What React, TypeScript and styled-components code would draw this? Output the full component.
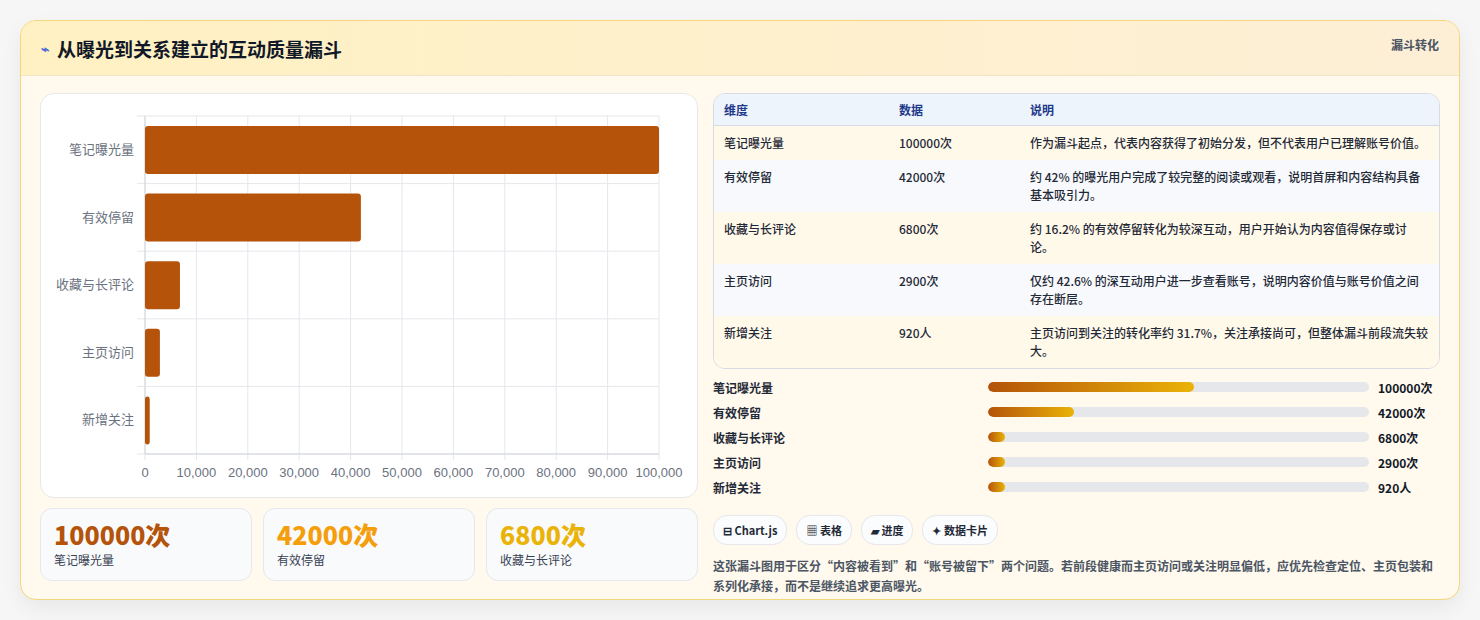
import styled, { createGlobalStyle } from 'styled-components';

const GlobalStyle = createGlobalStyle`
  body {
    margin: 0;
    background: #f6f6f6;
    font-family: "Noto Sans CJK SC", "Noto Sans", sans-serif;
    color: #1f2937;
  }
`;

const rows = [
  { name: '笔记曝光量', value: 100000, unit: '次', note: '作为漏斗起点，代表内容获得了初始分发，但不代表用户已理解账号价值。', fill: 54 },
  { name: '有效停留', value: 42000, unit: '次', note: '约 42% 的曝光用户完成了较完整的阅读或观看，说明首屏和内容结构具备基本吸引力。', fill: 22.6 },
  { name: '收藏与长评论', value: 6800, unit: '次', note: '约 16.2% 的有效停留转化为较深互动，用户开始认为内容值得保存或讨论。', fill: 4.5 },
  { name: '主页访问', value: 2900, unit: '次', note: '仅约 42.6% 的深互动用户进一步查看账号，说明内容价值与账号价值之间存在断层。', fill: 4.5 },
  { name: '新增关注', value: 920, unit: '人', note: '主页访问到关注的转化率约 31.7%，关注承接尚可，但整体漏斗前段流失较大。', fill: 4.5 },
];

function FunnelChart() {
  const x0 = 104;
  const w = 514;
  const top = 22;
  const rowH = 67.6;
  const ticks = [0, 10000, 20000, 30000, 40000, 50000, 60000, 70000, 80000, 90000, 100000];
  return (
    <svg width="657" height="403" viewBox="0 0 657 403">
      {ticks.map((t) => {
        const x = x0 + (t / 100000) * w;
        return (
          <g key={t}>
            <line x1={x} y1={top} x2={x} y2={top + rowH * 5 + 6} stroke="#e5e7eb" />
            <text x={x} y={383} fontSize="13" fill="#6b7280" textAnchor="middle" fontFamily="Liberation Sans, sans-serif">
              {t.toLocaleString('en-US')}
            </text>
          </g>
        );
      })}
      {[0, 1, 2, 3, 4, 5].map((i) => (
        <line key={i} x1={x0 - 8} y1={top + i * rowH} x2={x0 + w} y2={top + i * rowH} stroke="#e5e7eb" />
      ))}
      <line x1={x0} y1={top} x2={x0} y2={top + rowH * 5} stroke="#d1d5db" />
      <line x1={x0} y1={top + rowH * 5} x2={x0 + w} y2={top + rowH * 5} stroke="#d1d5db" />
      {rows.map((r, i) => {
        const y = top + i * rowH;
        const bw = Math.max(4, (r.value / 100000) * w);
        return (
          <g key={r.name}>
            <rect x={x0} y={y + 10} width={bw} height={48} rx="3" fill="#b45309" />
            <text x={x0 - 11} y={y + 38} fontSize="13" fill="#6b7280" textAnchor="end">
              {r.name}
            </text>
          </g>
        );
      })}
    </svg>
  );
}

export default function App() {
  return (
    <Page>
      <GlobalStyle />
      <Card>
        <Header>
          <Title>
            <Bolt>⌁</Bolt>从曝光到关系建立的互动质量漏斗
          </Title>
          <Tag>漏斗转化</Tag>
        </Header>
        <Body>
          <LeftCol>
            <ChartBox>
              <FunnelChart />
            </ChartBox>
            <Stats>
              <Stat>
                <StatNum color="#b45309">100000次</StatNum>
                <StatLabel>笔记曝光量</StatLabel>
              </Stat>
              <Stat>
                <StatNum color="#f59e0b">42000次</StatNum>
                <StatLabel>有效停留</StatLabel>
              </Stat>
              <Stat>
                <StatNum color="#eab308">6800次</StatNum>
                <StatLabel>收藏与长评论</StatLabel>
              </Stat>
            </Stats>
          </LeftCol>
          <RightCol>
            <Table>
              <colgroup>
                <col style={{ width: 175 }} />
                <col style={{ width: 131 }} />
                <col />
              </colgroup>
              <thead>
                <tr>
                  <Th>维度</Th>
                  <Th>数据</Th>
                  <Th>说明</Th>
                </tr>
              </thead>
              <tbody>
                {rows.map((r, i) => (
                  <Tr key={r.name} $odd={i % 2 === 1}>
                    <Td>{r.name}</Td>
                    <Td>
                      {r.value}
                      {r.unit}
                    </Td>
                    <Td>{r.note}</Td>
                  </Tr>
                ))}
              </tbody>
            </Table>
            <Progress>
              {rows.map((r) => (
                <ProgRow key={r.name}>
                  <ProgLabel>{r.name}</ProgLabel>
                  <Track>
                    <Fill style={{ width: `${r.fill}%` }} />
                  </Track>
                  <ProgVal>
                    {r.value}
                    {r.unit}
                  </ProgVal>
                </ProgRow>
              ))}
            </Progress>
            <Chips>
              <Chip>⊟ Chart.js</Chip>
              <Chip>▦ 表格</Chip>
              <Chip>▰ 进度</Chip>
              <Chip>✦ 数据卡片</Chip>
            </Chips>
            <Summary>
              这张漏斗图用于区分“内容被看到”和“账号被留下”两个问题。若前段健康而主页访问或关注明显偏低，应优先检查定位、主页包装和系列化承接，而不是继续追求更高曝光。
            </Summary>
          </RightCol>
        </Body>
      </Card>
    </Page>
  );
}

const Page = styled.div`
  padding: 20px;
  height: 620px;
  box-sizing: border-box;
`;

const Card = styled.div`
  width: 1440px;
  height: 580px;
  box-sizing: border-box;
  border: 1px solid #f6d67a;
  border-radius: 16px;
  background: #fff9ee;
  overflow: hidden;
  box-shadow: 0 8px 20px rgba(0, 0, 0, 0.06);
`;

const Header = styled.div`
  height: 54px;
  display: flex;
  justify-content: space-between;
  padding: 0 20px;
  background: linear-gradient(90deg, #fff1c2, #fdefd6);
  border-bottom: 1px solid #f1e4c8;
`;

const Title = styled.h2`
  margin: 0;
  display: flex;
  align-items: center;
  gap: 8px;
  font-size: 19px;
  font-weight: 700;
  color: #111827;
`;

const Bolt = styled.span`
  color: #4f6bd8;
  font-size: 14px;
`;

const Tag = styled.div`
  margin-top: 15px;
  font-size: 12px;
  font-weight: 700;
  color: #4b5563;
`;

const Body = styled.div`
  display: flex;
  gap: 15px;
  padding: 17px 19px 0 19px;
`;

const LeftCol = styled.div`
  width: 658px;
  display: flex;
  flex-direction: column;
  gap: 10px;
`;

const ChartBox = styled.div`
  height: 403px;
  background: #fff;
  border: 1px solid #e8e8e8;
  border-radius: 14px;
  overflow: hidden;
`;

const Stats = styled.div`
  display: grid;
  grid-template-columns: repeat(3, 1fr);
  gap: 11px;
`;

const Stat = styled.div`
  height: 73px;
  box-sizing: border-box;
  background: #f9fafc;
  border: 1px solid #e5e7eb;
  border-radius: 12px;
  padding: 8px 13px;
`;

const StatNum = styled.div<{ color: string }>`
  font-size: 25px;
  font-weight: 800;
  line-height: 34px;
  color: ${(p) => p.color};
`;

const StatLabel = styled.div`
  font-size: 12px;
  color: #374151;
`;

const RightCol = styled.div`
  width: 729px;
  display: flex;
  flex-direction: column;
`;

const Table = styled.table`
  width: 100%;
  table-layout: fixed;
  border-collapse: separate;
  border-spacing: 0;
  border: 1px solid #d6dbe4;
  border-radius: 12px;
  overflow: hidden;
  font-size: 12px;
  color: #1f2937;
`;

const Th = styled.th`
  text-align: left;
  height: 31px;
  padding: 0 10px;
  background: #eef4fc;
  color: #1e3a8a;
  font-weight: 700;
  border-bottom: 1px solid #d6dbe4;
`;

const Tr = styled.tr<{ $odd: boolean }>`
  background: ${(p) => (p.$odd ? '#f7f9fc' : '#fff9ea')};
  & + & td {
    border-top: 1px solid #e5e7eb;
  }
`;

const Td = styled.td`
  vertical-align: top;
  padding: 8px 10px;
  line-height: 18px;
  font-weight: 500;
`;

const Progress = styled.div`
  margin-top: 9px;
  display: flex;
  flex-direction: column;
  gap: 7px;
`;

const ProgRow = styled.div`
  display: grid;
  grid-template-columns: 266px 381px 1fr;
  gap: 9px;
  align-items: center;
  font-size: 12px;
  font-weight: 600;
  height: 18px;
  white-space: nowrap;
`;

const ProgLabel = styled.div`
  color: #1f2937;
`;

const Track = styled.div`
  height: 10px;
  border-radius: 5px;
  background: #e5e7eb;
  overflow: hidden;
`;

const Fill = styled.div`
  height: 100%;
  border-radius: 5px;
  background: linear-gradient(90deg, #b45309, #eab308);
`;

const ProgVal = styled.div`
  color: #111827;
`;

const Chips = styled.div`
  display: flex;
  gap: 9px;
  margin-top: 19px;
`;

const Chip = styled.div`
  height: 28px;
  display: flex;
  align-items: center;
  padding: 0 9px;
  border: 1px solid #e5e7eb;
  border-radius: 14px;
  background: #fbfcfd;
  font-size: 11px;
  font-weight: 700;
  color: #1f2937;
`;

const Summary = styled.p`
  margin: 11px 0 0;
  font-size: 12px;
  line-height: 20px;
  font-weight: 600;
  color: #4b5563;
`;
